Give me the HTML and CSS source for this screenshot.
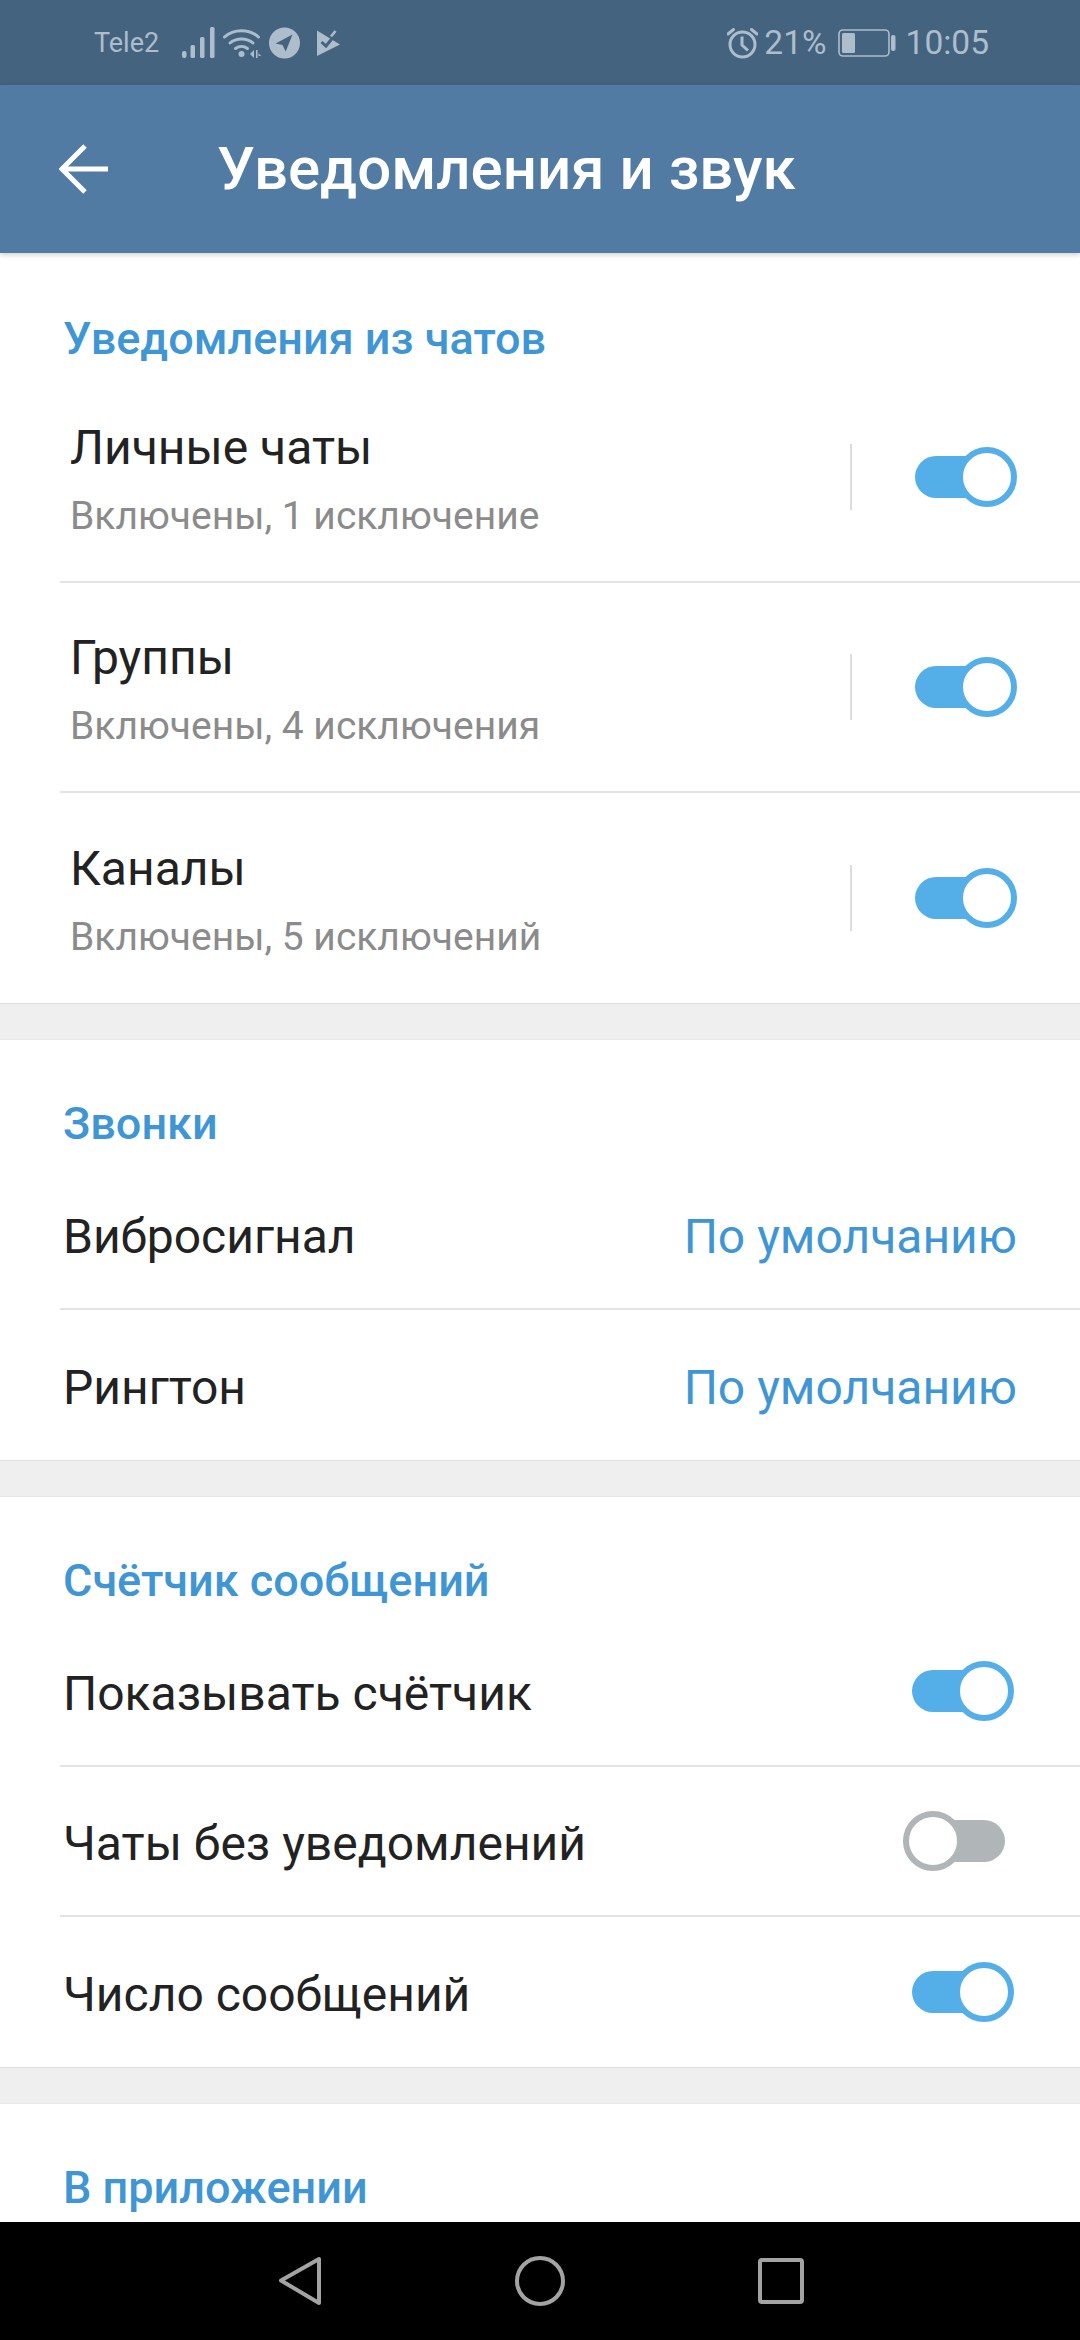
FILE: index.html
```html
<!DOCTYPE html>
<html lang="ru">
<head>
    <meta charset="utf-8">
    <title>Уведомления и звук</title>
    <link rel="stylesheet" href="styles.css">
</head>
<body>
    <div class="phone">
        <!-- Status bar -->
        <div class="status-bar">
            <span class="carrier">Tele2</span>
            <svg class="ic-signal" width="33" height="32" viewBox="0 0 33 32" fill="#adbdcb">
                <rect x="0" y="24" width="4.5" height="7" rx="2"/>
                <rect x="8.5" y="18" width="4.5" height="13" rx="1.5"/>
                <rect x="18" y="10" width="4.5" height="21" rx="1.5"/>
                <rect x="28" y="0" width="4.5" height="31" rx="1.5"/>
            </svg>
            <svg class="ic-wifi" width="38" height="32" viewBox="0 0 38 32" fill="none" stroke="#adbdcb" stroke-width="3" stroke-linecap="round">
                <path d="M1.5 10C10.5 1.5 26.5 1.5 35.5 10"/>
                <path d="M7 16C13 10.5 24 10.5 30 16"/>
                <path d="M12.5 21.5C16 18.8 21 18.8 24.5 21.5"/>
                <circle cx="18.5" cy="27" r="3" fill="#adbdcb" stroke="none"/>
                <path d="M27 27l4-4v8zM33 23h1.5v8H33zM35.5 26l2.5 3h-2.5z" fill="#adbdcb" stroke="none"/>
            </svg>
            <svg class="ic-tg" width="31" height="32" viewBox="0 0 31 32">
                <circle cx="15.5" cy="16" r="15.5" fill="#adbdcb"/>
                <path d="M6.7 16.5L23.5 7.5L16.7 24.5L13.5 18Z" fill="#44637f"/>
            </svg>
            <svg class="ic-check" width="24" height="28" viewBox="0 0 24 28">
                <path d="M0 1.5L23 15.5L0 27Z" fill="#adbdcb"/>
                <path d="M14 7.500L18.500 2" fill="none" stroke="#adbdcb" stroke-width="2.600"/>
                <path d="M4.500 13L9 17L15.500 9" fill="none" stroke="#44637f" stroke-width="3"/>
            </svg>
            <svg class="ic-alarm" width="31" height="32" viewBox="0 0 31 32" fill="none" stroke="#adbdcb" stroke-width="3">
                <circle cx="15.5" cy="17.5" r="12.5"/>
                <path d="M15 9.5V18L21 23.5"/>
                <path d="M1 7L6.5 2.5M30 7L24.5 2.5" stroke-linecap="round"/>
            </svg>
            <span class="percent">21%</span>
            <svg class="ic-battery" width="58" height="28" viewBox="0 0 58 28">
                <rect x="1" y="1" width="50" height="26" rx="4" fill="none" stroke="#adbdcb" stroke-width="1.6"/>
                <rect x="4" y="4" width="13" height="20" rx="1.5" fill="#adbdcb"/>
                <rect x="53" y="6" width="4.5" height="16" rx="2" fill="#adbdcb"/>
            </svg>
            <span class="clock">10:05</span>
        </div>

        <!-- Toolbar -->
        <div class="app-bar">
            <svg class="back" width="50" height="50" viewBox="0 0 50 50" fill="none" stroke="#fff" stroke-width="5">
                <path d="M2 25H49"/>
                <path d="M26 2L3 25L26 48"/>
            </svg>
            <h1 class="title">Уведомления и звук</h1>
        </div>

        <div class="content">
            <section class="group">
                <h2 class="group-title">Уведомления из чатов</h2>
                <div class="row row-tall">
                    <div class="row-text">
                        <div class="row-name">Личные чаты</div>
                        <div class="row-sub">Включены, 1 исключение</div>
                    </div>
                    <span class="split"></span>
                    <span class="switch on"></span>
                </div>
                <div class="row row-tall">
                    <div class="row-text">
                        <div class="row-name">Группы</div>
                        <div class="row-sub">Включены, 4 исключения</div>
                    </div>
                    <span class="split"></span>
                    <span class="switch on"></span>
                </div>
                <div class="row row-tall">
                    <div class="row-text">
                        <div class="row-name">Каналы</div>
                        <div class="row-sub">Включены, 5 исключений</div>
                    </div>
                    <span class="split"></span>
                    <span class="switch on"></span>
                </div>
            </section>

            <section class="group">
                <h2 class="group-title">Звонки</h2>
                <div class="row">
                    <div class="row-name">Вибросигнал</div>
                    <div class="row-value">По умолчанию</div>
                </div>
                <div class="row">
                    <div class="row-name">Рингтон</div>
                    <div class="row-value">По умолчанию</div>
                </div>
            </section>

            <section class="group">
                <h2 class="group-title">Счётчик сообщений</h2>
                <div class="row row-switch">
                    <div class="row-name">Показывать счётчик</div>
                    <span class="switch on"></span>
                </div>
                <div class="row row-switch">
                    <div class="row-name">Чаты без уведомлений</div>
                    <span class="switch off"></span>
                </div>
                <div class="row row-switch">
                    <div class="row-name">Число сообщений</div>
                    <span class="switch on"></span>
                </div>
            </section>

            <section class="group">
                <h2 class="group-title">В приложении</h2>
            </section>
        </div>

        <!-- Navigation bar -->
        <div class="nav-bar">
            <svg width="44" height="50" viewBox="0 0 44 50" fill="none" stroke="#a3a3a3" stroke-width="4" stroke-linejoin="round">
                <path d="M41 3V47L3 24.5Z"/>
            </svg>
            <svg width="50" height="50" viewBox="0 0 50 50" fill="none" stroke="#a3a3a3" stroke-width="4">
                <circle cx="25" cy="25" r="23"/>
            </svg>
            <svg width="46" height="46" viewBox="0 0 46 46" fill="none" stroke="#a3a3a3" stroke-width="4" stroke-linejoin="round">
                <rect x="2" y="2" width="42" height="42" rx="2"/>
            </svg>
        </div>
    </div>
</body>
</html>
```

FILE: styles.css
```css
:root {
    --status-color: #44637f;
    --bar-color: #517ba2;
    --accent-color: #3f96d4;
    --switch-color: #54aee8;
    --switch-off: #b0b5b8;
    --text-color: #222222;
    --sub-color: #8b8b8b;
    --line-color: #dcdcdc;
    --gap-color: #efefef;
    --status-text: #adbdcb;
}

*, *::before, *::after {
    margin: 0;
    padding: 0;
    box-sizing: border-box;
}

body {
    background: #fff;
    font-family: Roboto, sans-serif;
}

.phone {
    width: 1080px;
    height: 2340px;
    display: flex;
    flex-direction: column;
    overflow: hidden;
}

/* Status bar */
.status-bar {
    flex: none;
    height: 85px;
    background: var(--status-color);
    color: var(--status-text);
    display: flex;
    align-items: center;
    padding: 0 91px 0 94px;
}

.carrier {
    font-size: 27px;
    margin-right: 23px;
}

.ic-signal { margin-right: 8px; }
.ic-wifi { margin-right: 8px; }
.ic-tg { margin-right: 17px; }
.ic-check { margin-right: auto; }
.ic-alarm { margin-right: 6px; }

.percent {
    font-size: 33.5px;
    margin-right: 11px;
}

.ic-battery { margin-right: 10px; }

.clock {
    font-size: 33.5px;
}

/* Toolbar */
.app-bar {
    flex: none;
    height: 168px;
    background: var(--bar-color);
    box-shadow: 0 2px 5px rgba(0, 0, 0, 0.18);
    display: flex;
    align-items: center;
    padding: 0 0 2px 59px;
    position: relative;
}

.back {
    margin: 2px 108px 0 0;
}

.title {
    color: #fff;
    font-size: 60px;
    font-weight: 500;
}

/* Settings list */
.content {
    flex: 1;
    min-height: 0;
    overflow: hidden;
    background: var(--gap-color);
    display: flex;
    flex-direction: column;
    gap: 35px;
}

.group {
    flex: none;
    background: #fff;
    border-top: 1px solid #e6e6e6;
    border-bottom: 1px solid #e0e0e0;
}

.group:first-child {
    border-top: none;
}

.group-title {
    height: 120px;
    padding: 60px 0 0 63px;
    color: var(--accent-color);
    font-size: 45px;
    line-height: 48px;
    font-weight: 500;
}

.group:first-child .group-title {
    padding-top: 62px;
}

.row {
    height: 150px;
    margin-left: 60px;
    padding: 6px 63px 0 3px;
    display: flex;
    align-items: center;
    justify-content: space-between;
    border-bottom: 2px solid #e4e4e4;
}

.row:last-child {
    border-bottom: none;
}

.row-tall {
    height: 210px;
    padding: 0 63px 0 10px;
}

.row-switch {
    padding-right: 66px;
}

.row-text {
    flex: 1;
    padding-top: 4px;
}

.row-name {
    color: var(--text-color);
    font-size: 48px;
    line-height: 54px;
}

.row-sub {
    color: var(--sub-color);
    font-size: 39px;
    line-height: 44px;
    margin-top: 19px;
}

.row-value {
    color: var(--accent-color);
    font-size: 48px;
    line-height: 54px;
}

.split {
    flex: none;
    width: 2px;
    height: 66px;
    background: var(--line-color);
    margin-right: 63px;
}

/* Toggles */
.switch {
    flex: none;
    width: 102px;
    height: 60px;
    display: block;
    position: relative;
}

.row-switch .switch {
    margin-bottom: 6px;
}

.switch::before {
    content: "";
    position: absolute;
    left: 0;
    top: 9px;
    width: 90px;
    height: 42px;
    border-radius: 21px;
    background: var(--switch-color);
}

.switch::after {
    content: "";
    position: absolute;
    right: 0;
    top: 0;
    width: 60px;
    height: 60px;
    border-radius: 50%;
    background: #fff;
    border: 6px solid var(--switch-color);
}

.switch.off {
    margin-right: 9px;
}

.switch.off::before {
    left: 12px;
    background: var(--switch-off);
}

.switch.off::after {
    right: auto;
    left: 0;
    border-color: var(--switch-off);
}

/* Navigation bar */
.nav-bar {
    flex: none;
    height: 118px;
    background: #000;
    display: flex;
    align-items: center;
    padding-left: 278px;
    gap: 193px;
    position: relative;
}
```
